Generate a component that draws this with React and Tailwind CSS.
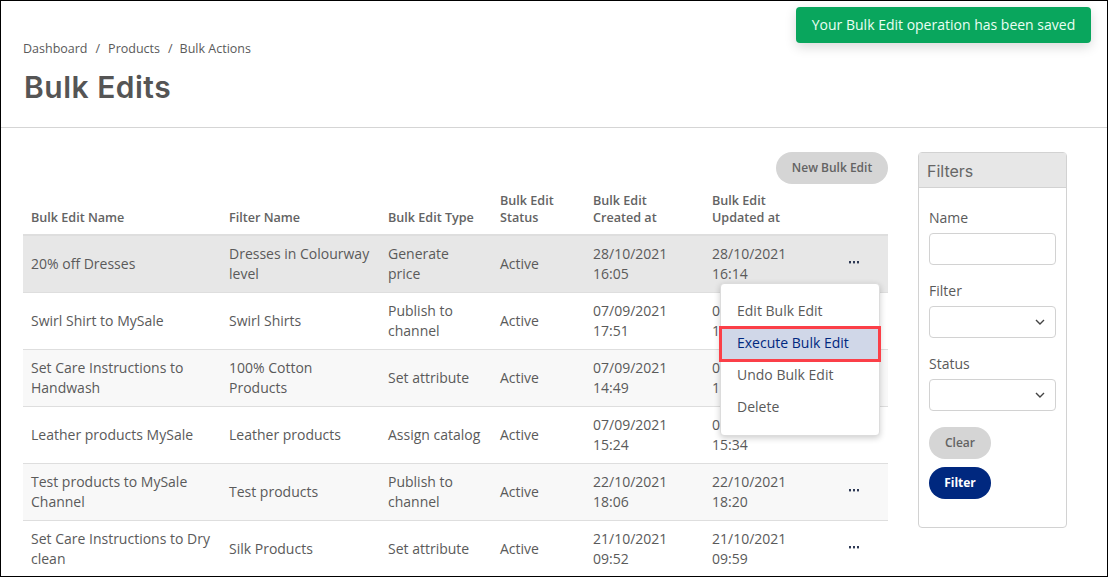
const rows = [
  { name: "20% off Dresses", filter: "Dresses in Colourway level", type: "Generate price", c: "28/10/2021 16:05", u: "28/10/2021 16:14", style: "h-[58px] border-t-2 pb-[1px] bg-[#e7e7e7]", dots: true },
  { name: "Swirl Shirt to MySale", filter: "Swirl Shirts", type: "Publish to channel", c: "07/09/2021 17:51", u: "07/09/2021 17:58", style: "h-[57px] border-t pb-[1px] bg-white" },
  { name: "Set Care Instructions to Handwash", filter: "100% Cotton Products", type: "Set attribute", c: "07/09/2021 14:49", u: "07/09/2021 15:02", style: "h-[57px] border-t pb-[1px] bg-[#f8f8f8]" },
  { name: "Leather products MySale", filter: "Leather products", type: "Assign catalog", c: "07/09/2021 15:24", u: "07/09/2021 15:34", style: "h-[57px] border-t pb-[1px] bg-white" },
  { name: "Test products to MySale Channel", filter: "Test products", type: "Publish to channel", c: "22/10/2021 18:06", u: "22/10/2021 18:20", style: "h-[57px] border-t pb-[1px] bg-[#f8f8f8]", dots: true },
  { name: "Set Care Instructions to Dry clean", filter: "Silk Products", type: "Set attribute", c: "21/10/2021 09:52", u: "21/10/2021 09:59", style: "h-[57px] border-t pb-[1px] bg-white", dots: true },
];

const cols = "grid grid-cols-[198px_159px_112px_93px_119px_113px_1fr]";

function Field({ label, children }) {
  return (
    <div className="mb-[16px]">
      <div className="mb-[5px] text-[14px] leading-[20px] text-[#5a5a5a]">{label}</div>
      {children}
    </div>
  );
}

function SelectBox() {
  return (
    <div className="flex h-[32px] w-[127px] items-center justify-end rounded-[4px] border border-[#d2d2d2] bg-white pr-[10px]">
      <svg width="10" height="6" viewBox="0 0 10 6" fill="none" stroke="#444" strokeWidth="1.4">
        <path d="M1 1l4 4 4-4" />
      </svg>
    </div>
  );
}

function Dots() {
  return (
    <svg width="10" height="3" viewBox="0 0 10 3" fill="#2f3a55" className="-mt-[2px]">
      <rect x="0" y="0" width="2" height="2.4" />
      <rect x="4" y="0" width="2" height="2.4" />
      <rect x="8" y="0" width="2" height="2.4" />
    </svg>
  );
}

export default function App() {
  return (
    <div className="relative h-[577px] w-[1108px] overflow-hidden border border-black bg-white font-['Open_Sans',sans-serif] text-[#5a5a5a]">
      <div className="h-[127px] border-b border-[#d5d5d5] pl-[22px] pt-[39px]">
        <div className="flex text-[12.5px] leading-[17px] text-[#5a5a5a]">
          <span>Dashboard</span>
          <span className="mx-[8px]">/</span>
          <span>Products</span>
          <span className="ml-[8px] mr-[7px]">/</span>
          <span>Bulk Actions</span>
        </div>
        <h1 className="ml-[1px] mt-[11px] font-['Inter',sans-serif] text-[30px] font-semibold leading-[38px] tracking-[0.5px] text-[#555]">Bulk Edits</h1>
      </div>

      <div className="flex items-start pl-[22px]">
        <div className="w-[865px] pt-[24px]">
          <div className="flex justify-end">
            <div className="flex h-[32px] w-[112px] items-center justify-center rounded-full bg-[#d5d5d5] text-[12px] font-semibold text-[#636363]">New Bulk Edit</div>
          </div>
          <div className={`${cols} mt-[8px] h-[42px] items-end pb-[9px] text-[12.6px] font-semibold leading-[17px] text-[#636363]`}>
            <div className="pl-[8px]">Bulk Edit Name</div>
            <div className="pl-[8px]">Filter Name</div>
            <div className="pl-[8px]">Bulk Edit Type</div>
            <div className="pl-[8px]">Bulk Edit<br />Status</div>
            <div className="pl-[8px]">Bulk Edit<br />Created at</div>
            <div className="pl-[8px]">Bulk Edit<br />Updated at</div>
            <div />
          </div>
          {rows.map((r) => (
            <div key={r.name} className={`${cols} ${r.style} items-center border-[#dedede] text-[14px] leading-[20px] text-[#5a5a5a]`}>
              <div className="pl-[8px] pr-[4px]">{r.name}</div>
              <div className="pl-[8px] pr-[10px]">{r.filter}</div>
              <div className="pl-[8px] pr-[10px]">{r.type}</div>
              <div className="pl-[8px]">Active</div>
              <div className="w-[90px] pl-[8px]">{r.c}</div>
              <div className="w-[90px] pl-[8px]">{r.u}</div>
              <div className="flex pl-[32px]">{r.dots ? <Dots /> : null}</div>
            </div>
          ))}
        </div>

        <div className="ml-[30px] mt-[24px] h-[376px] w-[149px] rounded-[4px] border border-[#d2d2d2]">
          <div className="flex h-[35px] items-center border-b border-[#d2d2d2] bg-[#e7e7e7] px-[8px] pt-[2px] font-['Inter',sans-serif] text-[16px] text-[#666]">Filters</div>
          <div className="px-[10px] pt-[20px]">
            <Field label="Name">
              <div className="h-[32px] w-[127px] rounded-[4px] border border-[#d2d2d2] bg-white" />
            </Field>
            <Field label="Filter"><SelectBox /></Field>
            <Field label="Status"><SelectBox /></Field>
            <div className="flex h-[32px] w-[62px] items-center justify-center rounded-full bg-[#d5d5d5] text-[12px] font-semibold text-[#636363]">Clear</div>
            <div className="mt-[8px] flex h-[32px] w-[62px] items-center justify-center rounded-full bg-[#00287f] text-[12px] font-bold text-white">Filter</div>
          </div>
        </div>
      </div>

      <div className="absolute left-[795px] top-[6px] flex h-[36px] w-[295px] items-center justify-center rounded-[4px] bg-[#09a65d] pb-[2px] text-[14px] font-medium text-[#eafff3] shadow-[0_4px_12px_rgba(0,0,0,0.15)]">Your Bulk Edit operation has been saved</div>

      <div className="absolute left-[719px] top-[282px] w-[160px] rounded-[4px] border border-[#dcdcdc] bg-white pb-[12px] pt-[11px] text-[14px] leading-[20px] text-[#5a5a5a] shadow-[0_2px_6px_rgba(0,0,0,0.2)]">
        <div className="flex h-[32px] items-center pl-[16px]">Edit Bulk Edit</div>
        <div className="flex h-[32px] items-center bg-[#d0d7e8] pl-[16px] text-[#00287f]">Execute Bulk Edit</div>
        <div className="flex h-[32px] items-center pl-[16px]">Undo Bulk Edit</div>
        <div className="flex h-[32px] items-center pl-[16px]">Delete</div>
      </div>
      <div className="absolute left-[718px] top-[325px] h-[36px] w-[162px] border-[3px] border-[#fb3f48]" />
    </div>
  );
}
